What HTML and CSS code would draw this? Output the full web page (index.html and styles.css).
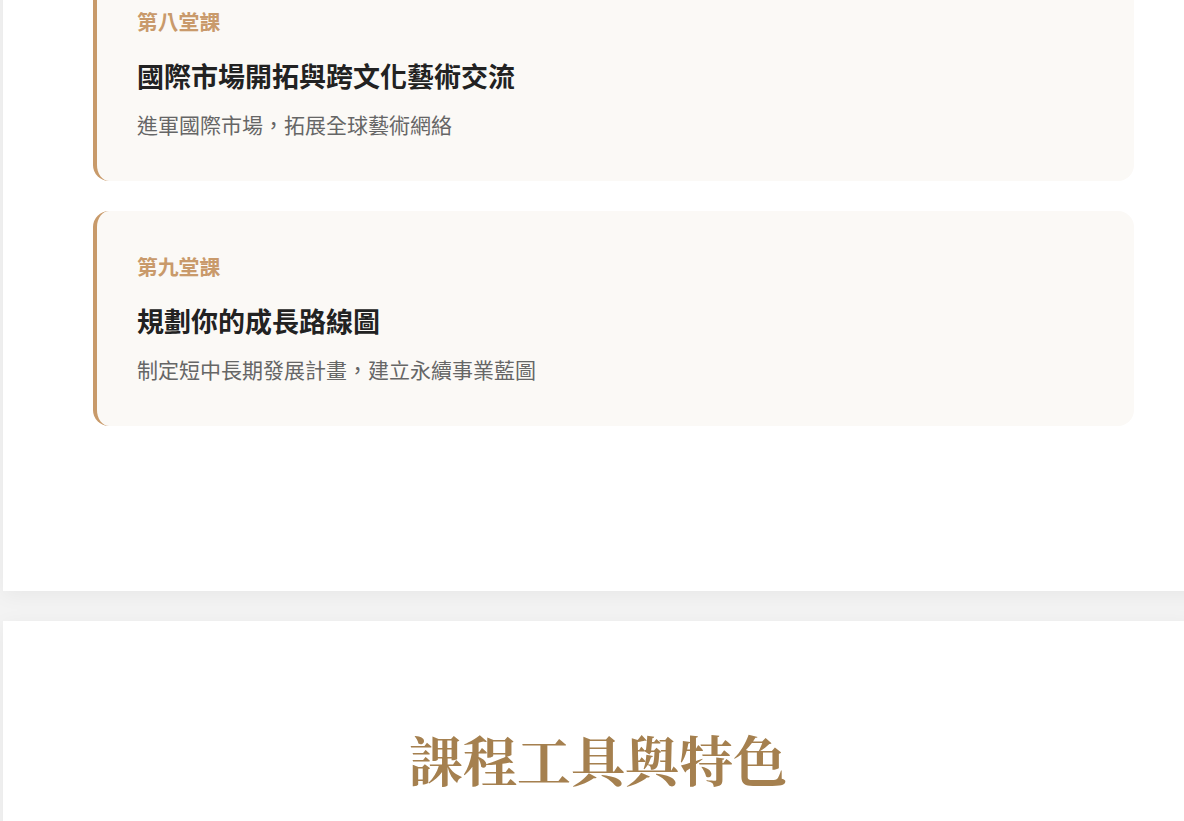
FILE: index.html
```html
<!DOCTYPE html>
<html lang="zh-Hant">
<head>
<meta charset="utf-8">
<title>課程</title>
<link rel="stylesheet" href="styles.css">
</head>
<body>
<div class="page">
  <section class="panel panel-lessons">
    <div class="lessons">
      <article class="lesson lesson-first">
        <div class="lesson-label">第八堂課</div>
        <h3 class="lesson-title">國際市場開拓與跨文化藝術交流</h3>
        <p class="lesson-desc">進軍國際市場，拓展全球藝術網絡</p>
      </article>
      <article class="lesson">
        <div class="lesson-label">第九堂課</div>
        <h3 class="lesson-title">規劃你的成長路線圖</h3>
        <p class="lesson-desc">制定短中長期發展計畫，建立永續事業藍圖</p>
      </article>
    </div>
  </section>
  <section class="panel panel-tools">
    <h2 class="section-title">課程工具與特色</h2>
  </section>
</div>
</body>
</html>
```

FILE: styles.css
```css
html, body {
  margin: 0;
  padding: 0;
}
body {
  background: #f3f3f3;
  font-family: "Noto Sans CJK TC", "Noto Sans", sans-serif;
  overflow: hidden;
}
.page {
  display: flex;
  flex-direction: column;
  gap: 30px;
  padding-left: 3px;
}
.panel {
  background: #ffffff;
  box-shadow: 0 4px 20px rgba(0, 0, 0, 0.05);
  width: 1200px;
}
.panel-lessons {
  padding: 0 0 165px 90px;
  margin-top: -34px;
}
.lessons {
  width: 1041px;
  display: flex;
  flex-direction: column;
  gap: 30px;
}
.lesson {
  background: #fbf9f6;
  border-left: 4px solid #c89a6a;
  border-radius: 16px;
  padding: 39px 40px 40px 40px;
}
.lesson-label {
  color: #c99a6b;
  font-size: 20.8px;
  font-weight: 700;
  line-height: 33px;
  margin-bottom: 19px;
}
.lesson-title {
  margin: 0 0 13px;
  color: #222222;
  font-size: 27px;
  font-weight: 700;
  line-height: 38px;
}
.lesson-desc {
  margin: 0;
  color: #666666;
  font-size: 21px;
  font-weight: 400;
  line-height: 33px;
}
.panel-tools {
  padding: 96px 0 40px 0;
  width: 1190px;
}
.section-title {
  margin: 0;
  text-align: center;
  color: #a5804f;
  font-family: "Noto Serif CJK TC", "Noto Serif CJK SC", "Noto Serif TC", serif;
  font-size: 54px;
  font-weight: 700;
  line-height: 84px;
}
```
